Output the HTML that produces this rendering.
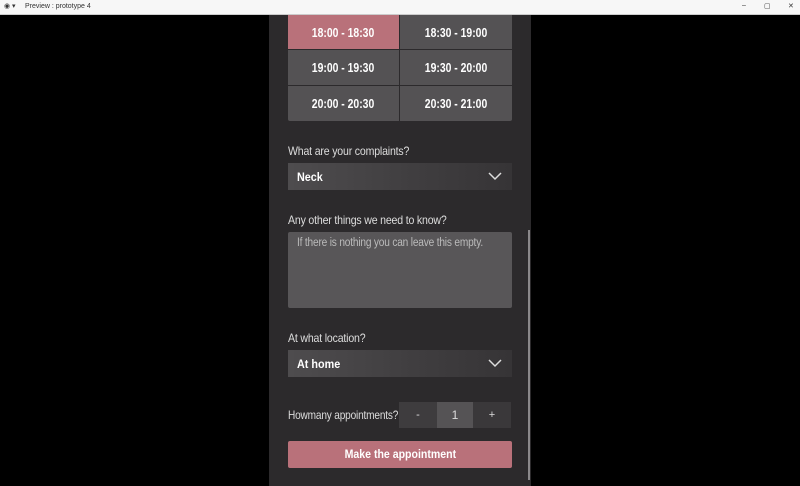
<!DOCTYPE html>
<html><head><style>
*{margin:0;padding:0;box-sizing:border-box}
body{width:800px;height:486px;background:#000;position:relative;overflow:hidden;font-family:"Liberation Sans",sans-serif;color:#e6e6e6}
.tb{position:absolute;left:0;top:0;width:800px;height:15px;background:#f7f7f7;border-bottom:1px solid #ccc;font-size:7px;color:#333}
.panel{position:absolute;left:269px;top:15px;width:262px;height:471px;background:#2c2a2c}
.a{position:absolute}
.cell{position:absolute;background:#545254;color:#fff;font-size:13px;font-weight:bold;display:flex;align-items:center;justify-content:center}
.cell span{display:inline-block;transform:scaleX(.8);white-space:nowrap}
.lbl{position:absolute;font-size:12px;color:#ddd;letter-spacing:-.2px;transform:scaleX(.88);transform-origin:left;white-space:nowrap}
.dd{position:absolute;left:19px;width:224px;height:27px;background:linear-gradient(90deg,#4e4c4e,#3f3d3f 60%,#363436);font-weight:bold;font-size:12px;color:#fff;padding:7px 9px}
.dd span{display:inline-block;transform:scaleX(.9);transform-origin:left}
.chev{position:absolute;right:10px;top:8px}
</style></head><body>
<div class="tb"><span class="a" style="left:4px;top:2px">◉ ▾</span><span class="a" style="left:25px;top:3px">Preview : prototype 4</span><span class="a" style="left:742px;top:2px">–</span><span class="a" style="left:764px;top:2px">▢</span><span class="a" style="left:788px;top:2px">✕</span></div>
<div class="panel">
<div class="cell" style="left:19px;top:0;width:111px;height:34px;background:#b9717a"><span>18:00 - 18:30</span></div>
<div class="cell" style="left:131px;top:0;width:112px;height:34px"><span>18:30 - 19:00</span></div>
<div class="cell" style="left:19px;top:35px;width:111px;height:35px"><span>19:00 - 19:30</span></div>
<div class="cell" style="left:131px;top:35px;width:112px;height:35px"><span>19:30 - 20:00</span></div>
<div class="cell" style="left:19px;top:71px;width:111px;height:35px;border-radius:0 0 0 2px"><span>20:00 - 20:30</span></div>
<div class="cell" style="left:131px;top:71px;width:112px;height:35px;border-radius:0 0 2px 0"><span>20:30 - 21:00</span></div>
<div class="lbl" style="left:19px;top:129px">What are your complaints?</div>
<div class="dd" style="top:148px"><span>Neck</span><svg class="chev" width="14" height="10"><path d="M1 2l6 6 6-6" stroke="#ddd" stroke-width="1.5" fill="none"/></svg></div>
<div class="lbl" style="left:19px;top:198px">Any other things we need to know?</div>
<div class="a" style="left:19px;top:217px;width:224px;height:76px;background:#585658;border-radius:2px"></div>
<div class="lbl" style="left:28px;top:222px;font-size:11.5px;color:#bbb">If there is nothing you can leave this empty.</div>
<div class="lbl" style="left:19px;top:316px">At what location?</div>
<div class="dd" style="top:335px"><span>At home</span><svg class="chev" width="14" height="10"><path d="M1 2l6 6 6-6" stroke="#ddd" stroke-width="1.5" fill="none"/></svg></div>
<div class="lbl" style="left:19px;top:393px;transform:scaleX(.84)">Howmany appointments?</div>
<div class="a" style="left:130px;top:387px;width:38px;height:26px;background:#3e3c3e;color:#ddd;font-size:11px;text-align:center;line-height:26px">-</div>
<div class="a" style="left:168px;top:387px;width:36px;height:26px;background:#555355;color:#ddd;font-size:12px;text-align:center;line-height:26px">1</div>
<div class="a" style="left:204px;top:387px;width:38px;height:26px;background:#3a383a;color:#ddd;font-size:11px;text-align:center;line-height:26px">+</div>
<div class="a" style="left:19px;top:426px;width:224px;height:27px;background:#b9717a;border-radius:2px;color:#fff;font-weight:bold;font-size:12px;text-align:center;line-height:27px"><span style="display:inline-block;transform:scaleX(.88)">Make the appointment</span></div>
<div class="a" style="left:259px;top:215px;width:2px;height:250px;background:#8a888a"></div>
</div>
</body></html>
